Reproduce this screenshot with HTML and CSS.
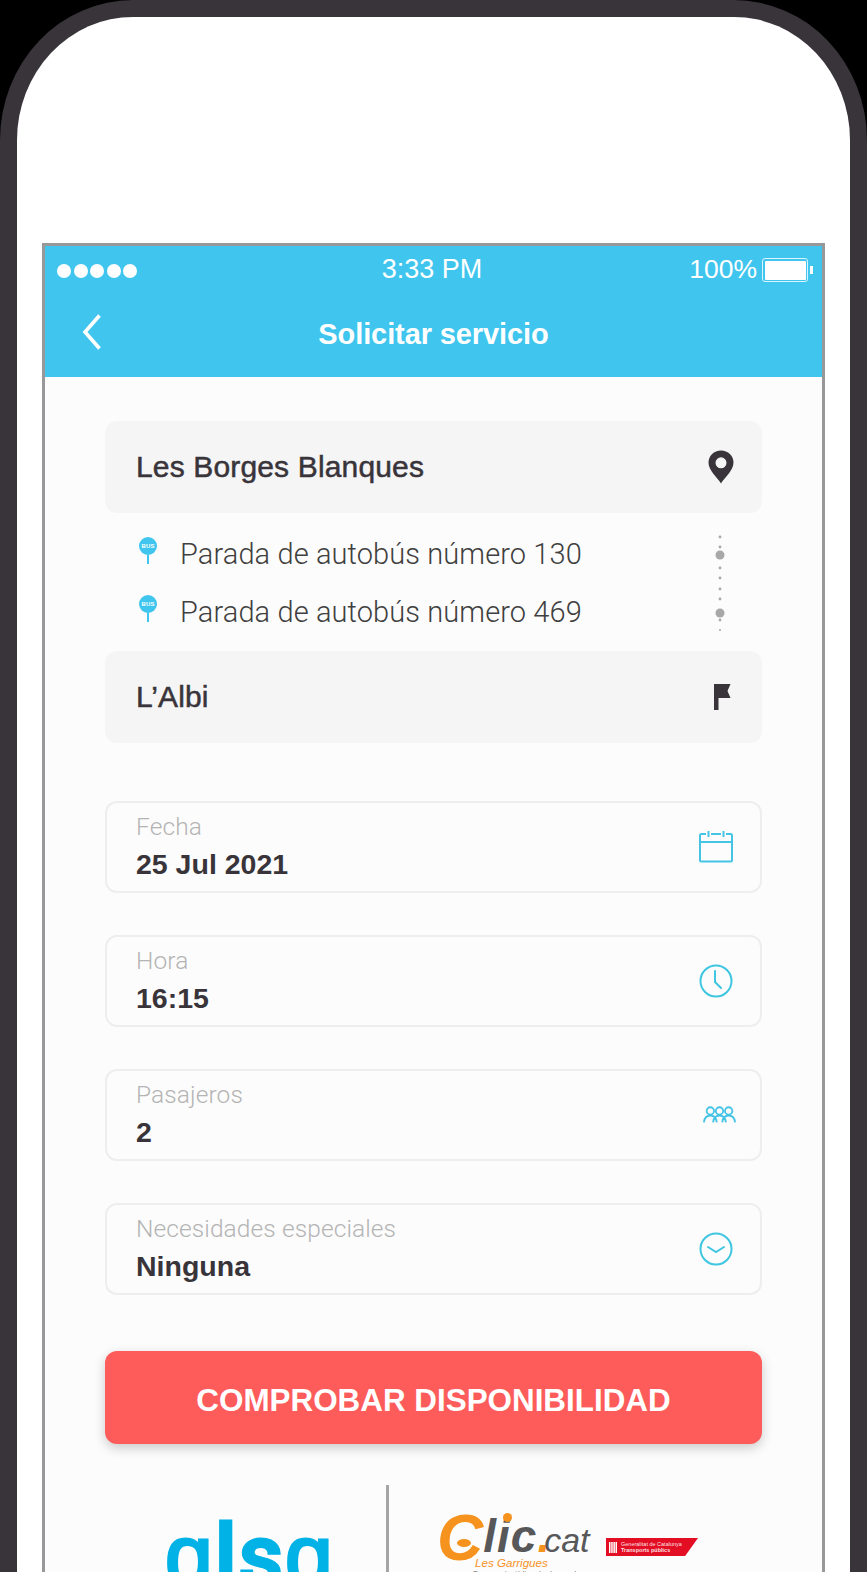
FILE: index.html
```html
<!DOCTYPE html>
<html lang="es">
<head>
<meta charset="utf-8">
<title>Solicitar servicio</title>
<link rel="stylesheet" href="styles.css">
</head>
<body>
<div class="device">
  <div class="screen">
    <header class="header">
      <div class="status">
        <div class="signal"><i></i><i></i><i></i><i></i><i></i></div>
        <div class="time">3:33 PM</div>
        <div class="power">
          <span class="pct">100%</span>
          <span class="battery"><span class="battery-fill"></span></span>
          <span class="nub"></span>
        </div>
      </div>
      <div class="nav">
        <svg class="back" width="20" height="36" viewBox="0 0 20 36"><path d="M17.5 1.5 3 18l14.500 16.500" fill="none" stroke="#fff" stroke-width="3.600"/></svg>
        <h1 class="title">Solicitar servicio</h1>
      </div>
    </header>
    <main class="content">
      <div class="place">
        <span class="place-name">Les Borges Blanques</span>
        <svg width="26" height="34" viewBox="0 0 26 34"><path fill-rule="evenodd" fill="#38343a" d="M13 0.500C6 .5.500 5.800.500 12.600c0 8 8.700 14.700 12.500 20.900 3.800-6.200 12.500-12.900 12.500-20.900C25.500 5.800 20 .5 13 .5Zm0 6.800a5.500 5.500 0 1 1 0 11 5.500 5.500 0 0 1 0-11Z"/></svg>
      </div>
      <div class="route">
        <ul class="stops">
          <li class="stop">
            <span class="pin"><span class="pin-head">BUS</span><span class="pin-stem"></span></span>
            <span>Parada de autobús número 130</span>
          </li>
          <li class="stop">
            <span class="pin"><span class="pin-head">BUS</span><span class="pin-stem"></span></span>
            <span>Parada de autobús número 469</span>
          </li>
        </ul>
        <svg class="dots" width="12" height="100" viewBox="0 0 12 100" fill="#a8a8a8">
          <circle cx="6" cy="2" r="1.400"/><circle cx="6" cy="12" r="1.400"/><circle cx="6" cy="20" r="4.500"/>
          <circle cx="6" cy="33" r="1.400"/><circle cx="6" cy="43" r="1.400"/><circle cx="6" cy="54" r="1.400"/><circle cx="6" cy="64" r="1.400"/>
          <circle cx="6" cy="78" r="4.500"/><circle cx="6" cy="85" r="1.400"/><circle cx="6" cy="95" r="1"/>
        </svg>
      </div>
      <div class="place place-last">
        <span class="place-name">L’Albi</span>
        <svg class="flag" width="17" height="26" viewBox="0 0 17 26"><path fill="#38343a" d="M0 0h16.500l-3 7 3 7H4.500v12H0Z"/></svg>
      </div>

      <div class="field">
        <div><div class="label">Fecha</div><div class="value">25 Jul 2021</div></div>
        <svg class="ficon" width="36" height="32" viewBox="0 0 36 32" fill="none" stroke="#45c4e6" stroke-width="2"><path d="M8 3H3.500A1.500 1.500 0 0 0 2 4.500V29a1.500 1.500 0 0 0 1.500 1.500h29A1.500 1.500 0 0 0 34 29V4.500A1.500 1.500 0 0 0 32.500 3H28M13 3h10M2 11h32M10.500 0v6M25.500 0v6"/></svg>
      </div>
      <div class="field">
        <div><div class="label">Hora</div><div class="value">16:15</div></div>
        <svg class="ficon" width="36" height="36" viewBox="0 0 36 36" fill="none" stroke="#3fc6e0" stroke-width="2"><circle cx="18" cy="18" r="15.500"/><path d="M17 8v11l6 6" stroke-linecap="round"/></svg>
      </div>
      <div class="field">
        <div><div class="label">Pasajeros</div><div class="value">2</div></div>
        <svg class="ficon ficon-people" width="33" height="20" viewBox="0 0 36 20" fill="none" stroke="#45c4e6" stroke-width="2"><circle cx="8" cy="5.500" r="4"/><circle cx="18" cy="5.500" r="4"/><circle cx="28" cy="5.500" r="4"/><path d="M1 18c.5-5 3.500-7.500 7-7.500s6.500 2.500 7 7.500M11 18c.5-5 3.500-7.500 7-7.500s6.500 2.500 7 7.500M21 18c.5-5 3.500-7.500 7-7.500s6.500 2.500 7 7.500"/></svg>
      </div>
      <div class="field">
        <div><div class="label">Necesidades especiales</div><div class="value">Ninguna</div></div>
        <svg class="ficon" width="36" height="36" viewBox="0 0 36 36" fill="none" stroke="#3fc6e0" stroke-width="2"><circle cx="18" cy="18" r="15.500"/><path d="M10 16l8 5 8-5" stroke-linecap="round"/></svg>
      </div>

      <button class="cta" type="button">COMPROBAR DISPONIBILIDAD</button>

      <footer class="logos">
        <div class="alsa">ɑlsɑ</div>
        <div class="divider"></div>
        <div class="clic">
          <div class="clic-mark"><span class="clic-c">C</span><span class="clic-lic">lic</span><span class="clic-dot">.</span><span class="clic-cat">cat</span></div>
          <div class="clic-place">Les Garrigues</div>
          <div class="clic-sub">Transport públic a la demanda</div>
        </div>
        <div class="gencat">
          <svg class="gencat-flag" width="8" height="11" viewBox="0 0 8 11" fill="#fff"><path d="M0 0h1.500v11H0zM2.200 0h1.500v11H2.200zM4.400 0h1.500v11H4.400zM6.500 0H8v11H6.500z"/></svg>
          <div class="gencat-text"><div>Generalitat de Catalunya</div><div class="gencat-strong">Transports públics</div></div>
        </div>
      </footer>
    </main>
  </div>
</div>
</body>
</html>
```

FILE: styles.css
```css
* { box-sizing: border-box; }
html, body { margin: 0; height: 1572px; overflow: hidden; background: #000; }
body { font-family: "Liberation Sans", Arial, sans-serif; color: #38343a; }

.device {
  width: 867px;
  height: 1572px;
  background: #fff;
  border: 17px solid #38343a;
  border-bottom: 0;
  border-radius: 133px 133px 0 0 / 140px 140px 0 0;
  padding: 226px 25px 0;
  overflow: hidden;
}
.screen {
  height: 1329px;
  background: #fcfcfc;
  border: 3px solid #98989b;
  border-bottom: 0;
  overflow: hidden;
}

.header { height: 131px; background: #40c6ee; color: #fff; }
.status {
  height: 47px;
  display: grid;
  grid-template-columns: 1fr auto 1fr;
  align-items: center;
  padding: 0 9px 0 12px;
}
.signal { display: flex; gap: 2.500px; }
.signal i { width: 14px; height: 14px; border-radius: 50%; background: #fff; margin-top: 3px; }
.time { font-size: 27px; margin-right: 6px; }
.power { display: flex; align-items: center; justify-content: flex-end; font-size: 26.500px; }
.pct { margin-right: 5px; }
.battery { width: 46px; height: 24px; border: 1px solid rgba(255, 255, 255, .8); border-radius: 3px; padding: 1.500px; display: block; margin-top: 1px; }
.battery-fill { display: block; height: 100%; background: #fff; border-radius: 1px; }
.nub { width: 3px; height: 8px; background: #fff; margin-left: 2px; margin-top: 1px; }

.nav { position: relative; height: 84px; display: flex; align-items: center; justify-content: center; }
.back { position: absolute; left: 37px; top: 21px; }
.title { margin: 0 0 2px; font-size: 29px; font-weight: 700; letter-spacing: -.1px; }

.content { padding: 44px 60px 0; }

.place {
  height: 92px;
  background: #f5f5f5;
  border-radius: 12px;
  padding: 0 28px 0 31px;
  display: flex;
  align-items: center;
  justify-content: space-between;
}
.place-name { font-size: 30px; letter-spacing: .15px; -webkit-text-stroke: .5px #38343a; }
.flag { margin-right: 3px; }
.place-last { margin-bottom: 58px; }

.route { height: 138px; display: flex; justify-content: space-between; padding: 12px 36px 0 34px; }
.stops { list-style: none; margin: 0; padding: 0; }
.stop {
  height: 58px;
  display: flex;
  align-items: center;
  gap: 23px;
  font-family: Roboto, sans-serif;
  font-weight: 300;
  font-size: 29px;
  letter-spacing: .1px;
  color: #404040;
}
.pin { width: 18px; display: flex; flex-direction: column; align-items: center; margin-top: -8px; }
.pin-head {
  width: 18px; height: 18px; border-radius: 50%;
  background: #40c6ee; color: #fff;
  font: 700 6px/18px "Liberation Sans", sans-serif;
  text-align: center;
}
.pin-stem { width: 2px; height: 9px; background: #40c6ee; }
.dots { display: block; margin-top: 10px; }

.field {
  height: 92px;
  margin-bottom: 42px;
  border: 2px solid #eeeeee;
  border-radius: 12px;
  padding: 10px 26px 0 29px;
  display: flex;
  align-items: center;
  justify-content: space-between;
}
.label { font-family: Roboto, sans-serif; font-weight: 300; font-size: 24.500px; letter-spacing: .1px; line-height: 28px; color: #b4b4b4; margin-top: -10px; }
.value { font-size: 28.500px; font-weight: 700; line-height: 33px; margin-top: 7px; }
.ficon { display: block; margin-bottom: 10px; }
.ficon-people { margin-right: -2px; }

.cta {
  display: block;
  width: 100%;
  height: 93px;
  margin-top: 56px;
  border: 0;
  border-radius: 12px;
  padding: 6px 0 0;
  background: #fe5b5b;
  color: #fff;
  font: 700 31.400px "Liberation Sans", sans-serif;
  box-shadow: 0 4px 12px rgba(0, 0, 0, .2);
}

.logos { display: flex; align-items: flex-start; height: 120px; margin-top: 41px; }
.alsa {
  width: 281px;
  padding-left: 60px;
  margin-top: 26px;
  font: 500 86px/90px Roboto, sans-serif;
  color: #00b2e6;
  letter-spacing: 2px;
  -webkit-text-stroke: 3px #00b2e6;
}
.divider { width: 3px; height: 90px; background: #a5a5a5; }
.clic { position: relative; width: 169px; margin-left: 48px; margin-top: 22px; white-space: nowrap; }
.clic-mark { display: flex; align-items: baseline; height: 46px; line-height: 46px; color: #58585a; font-weight: 700; font-style: italic; }
.clic-c { position: relative; top: 8px; font-size: 64px; color: #f6921e; }
.clic-c::after { content: ""; position: absolute; left: 20px; top: 24px; width: 14px; height: 8px; border-radius: 50%; background: #f6921e; }
.clic-lic { font-size: 46px; letter-spacing: 1px; }
.clic-lic::before { content: ""; position: absolute; left: 66px; top: 6px; width: 9px; height: 9px; border-radius: 50%; background: #f6921e; }
.clic-dot { font-size: 46px; color: #f6921e; letter-spacing: -6px; }
.clic-cat { font-size: 34px; font-weight: 400; }
.clic-place { font-size: 11.600px; font-style: italic; color: #f6921e; line-height: 13px; margin-top: 3px; margin-left: 38px; }
.clic-sub { font-size: 8px; color: #777; line-height: 9px; margin-left: 36px; }
.gencat {
  margin-top: 53px;
  flex: none;
  width: 92px;
  height: 18px;
  background: #e30d24;
  clip-path: polygon(0 0, 100% 0, 86% 100%, 0 100%);
  display: flex;
  align-items: center;
  gap: 4px;
  padding-left: 3px;
  color: rgba(255, 255, 255, .9);
  font-size: 5.500px;
  line-height: 6px;
  white-space: nowrap;
}
.gencat-strong { font-weight: 700; }
.gencat-flag { flex: none; }
```
